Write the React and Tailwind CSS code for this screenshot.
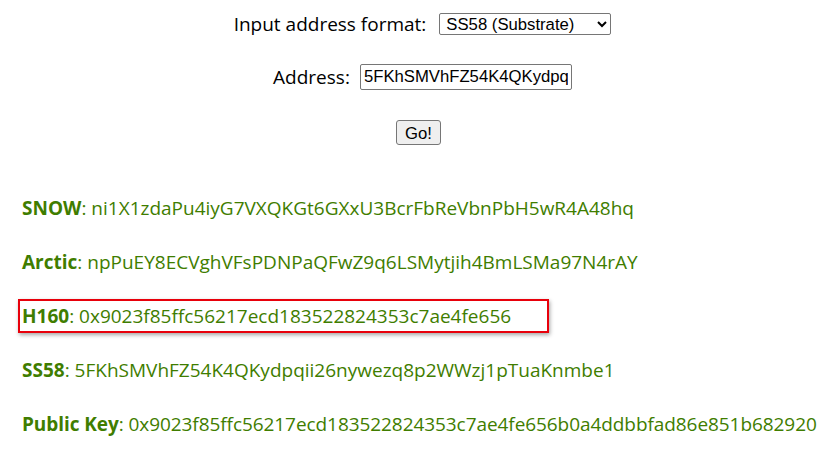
export default function App() {
  const rows = [
    { label: "SNOW", value: "ni1X1zdaPu4iyG7VXQKGt6GXxU3BcrFbReVbnPbH5wR4A48hq" },
    { label: "Arctic", value: "npPuEY8ECVghVFsPDNPaQFwZ9q6LSMytjih4BmLSMa97N4rAY" },
    { label: "H160", value: "0x9023f85ffc56217ecd183522824353c7ae4fe656", marked: true },
    { label: "SS58", value: "5FKhSMVhFZ54K4QKydpqii26nywezq8p2WWzj1pTuaKnmbe1" },
    { label: "Public Key", value: "0x9023f85ffc56217ecd183522824353c7ae4fe656b0a4ddbbfad86e851b682920", tight: true },
  ];

  return (
    <div className="h-[461px] w-[830px] overflow-hidden bg-white font-['Open_Sans',sans-serif] text-[19px] text-black">
      <div className="flex flex-col items-center pl-[15px]">
        <div className="flex h-[48px] items-center gap-[13px]">
          <span>Input address format:</span>
          <select
            className="h-[22px] w-[172px] rounded-[2px] border border-[#767676] bg-white pl-[2px] font-['Liberation_Sans',sans-serif] text-[16.7px] text-black"
            defaultValue="ss58"
          >
            <option value="ss58">SS58 (Substrate)</option>
            <option value="h160">H160</option>
          </select>
        </div>
        <div className="flex h-[58px] items-center gap-[10px]">
          <span>Address:</span>
          <input
            className="h-[26px] w-[212px] rounded-[2px] border border-[#767676] px-[3px] font-['Liberation_Sans',sans-serif] text-[16.7px] text-black outline-none"
            defaultValue="5FKhSMVhFZ54K4QKydpqii26nywezq8p2WWzj1pTuaKnmbe1"
          />
        </div>
        <div className="flex h-[53px] items-center pr-[8px]">
          <button className="h-[25px] w-[45px] rounded-[3px] border border-[#767676] bg-[#efefef] font-['Liberation_Sans',sans-serif] text-[16.7px] text-black">
            Go!
          </button>
        </div>
      </div>

      <div className="mt-[22px] flex flex-col text-[#3f7d00]">
        {rows.map((row) => (
          <div key={row.label} className="relative flex h-[54px] items-center px-[22px]">
            {row.marked && (
              <div className="absolute left-[18px] top-[10px] h-[34px] w-[531px] border-2 border-[#e8000b] shadow-[1px_2px_4px_rgba(0,0,0,0.35)]" />
            )}
            <span className={row.tight ? "whitespace-nowrap tracking-[-0.07px]" : "whitespace-nowrap"}>
              <b className="font-bold">{row.label}</b>: {row.value}
            </span>
          </div>
        ))}
      </div>
    </div>
  );
}
